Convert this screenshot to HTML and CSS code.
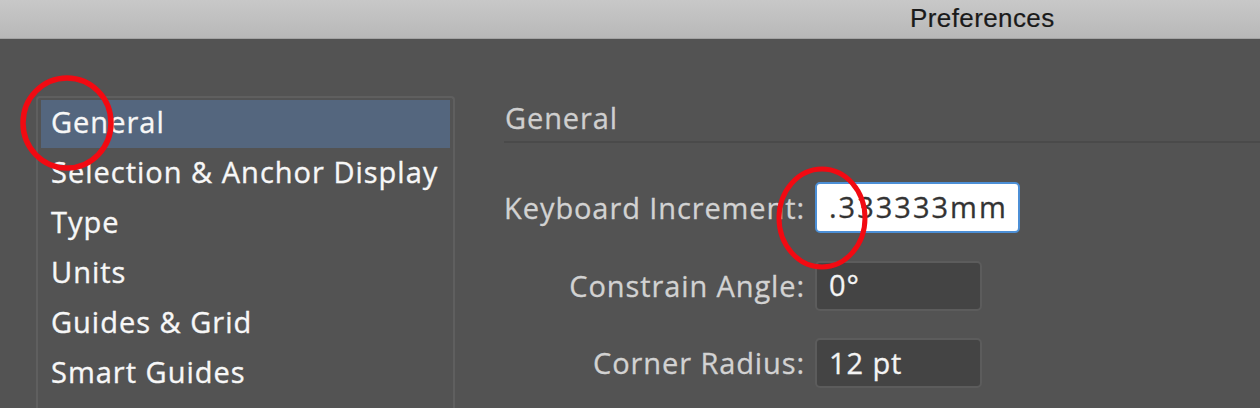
FILE: index.html
```html
<!DOCTYPE html>
<html>
<head>
<meta charset="utf-8">
<link rel="stylesheet" href="styles.css">
</head>
<body>
<div class="window">
  <header class="titlebar"><span class="title">Preferences</span></header>
  <main class="content">
    <nav class="sidebar">
      <div class="item selected">General</div>
      <div class="item">Selection &amp; Anchor Display</div>
      <div class="item">Type</div>
      <div class="item">Units</div>
      <div class="item">Guides &amp; Grid</div>
      <div class="item">Smart Guides</div>
    </nav>
    <section class="pane">
      <h2 class="pane-title">General</h2>
      <div class="form">
        <div class="row">
          <label class="label">Keyboard Increment:</label>
          <div class="field field-active">.333333mm</div>
        </div>
        <div class="row">
          <label class="label">Constrain Angle:</label>
          <div class="field">0°</div>
        </div>
        <div class="row">
          <label class="label">Corner Radius:</label>
          <div class="field">12 pt</div>
        </div>
      </div>
    </section>
  </main>
  <svg class="annotations" width="1260" height="408" viewBox="0 0 1260 408">
    <ellipse cx="67" cy="123" rx="44" ry="45" fill="none" stroke="#f20a12" stroke-width="5.5"/>
    <ellipse cx="822" cy="218" rx="43" ry="49" fill="none" stroke="#f20a12" stroke-width="5"/>
  </svg>
</div>
</body>
</html>
```

FILE: styles.css
```css
* { box-sizing: border-box; }
html, body {
  margin: 0;
  padding: 0;
  background: #535353;
}
.window {
  position: relative;
  width: 1260px;
  height: 408px;
  overflow: hidden;
  background: #535353;
  font-family: "Open Sans", "Noto Sans", sans-serif;
}
.titlebar {
  height: 39px;
  display: flex;
  align-items: center;
  padding-left: 910px;
  background: linear-gradient(#c8c8c8, #b8b8b8);
  border-bottom: 1px solid #a3a3a3;
}
.title {
  font-family: "Liberation Sans", Arial, sans-serif;
  font-size: 26px;
  letter-spacing: 0.4px;
  color: #1a1a1a;
  padding-bottom: 1px;
  -webkit-text-stroke: 0.2px #1a1a1a;
}
.content {
  display: flex;
  align-items: flex-start;
}
.sidebar {
  margin-left: 36px;
  margin-top: 57px;
  width: 419px;
  height: 340px;
  border: 2px solid #5f5f5f;
  border-bottom: none;
  border-radius: 4px 4px 0 0;
  padding: 2px 3px 0 3px;
  display: flex;
  flex-direction: column;
  gap: 2px;
}
.item {
  height: 48px;
  display: flex;
  align-items: center;
  padding-left: 10px;
  padding-bottom: 5px;
  font-size: 29px;
  color: #f7f7f7;
  letter-spacing: 1px;
  white-space: nowrap;
  -webkit-text-stroke: 0.35px #f7f7f7;
}
.item.selected {
  background: #54667e;
}
.pane {
  flex: 1;
  margin-left: 49px;
  margin-top: 57px;
}
.pane-title {
  margin: 0;
  height: 47px;
  display: flex;
  align-items: center;
  padding-left: 1px;
  padding-bottom: 2px;
  font-weight: normal;
  font-size: 29px;
  letter-spacing: 0.9px;
  color: #cfcfcf;
  border-bottom: 2px solid #4a4a4a;
  -webkit-text-stroke: 0.3px #cfcfcf;
}
.form {
  display: flex;
  flex-direction: column;
  gap: 27.5px;
  margin-top: 39px;
}
.row {
  display: flex;
  align-items: center;
  gap: 10px;
}
.label {
  width: 301px;
  text-align: right;
  font-size: 29px;
  letter-spacing: 0.9px;
  color: #d2d2d2;
  white-space: nowrap;
  padding-bottom: 1px;
  -webkit-text-stroke: 0.3px #d2d2d2;
}
.field {
  width: 167px;
  height: 50px;
  display: flex;
  align-items: center;
  padding-left: 12px;
  padding-bottom: 2px;
  background: #444444;
  border: 2px solid #5c5c5c;
  border-radius: 5px;
  font-size: 29px;
  letter-spacing: 0.9px;
  color: #f4f4f4;
  -webkit-text-stroke: 0.3px #f4f4f4;
}
.field-active {
  width: 205px;
  height: 51px;
  background: #ffffff;
  border-color: #4c8fd6;
  color: #333333;
  letter-spacing: 2px;
  -webkit-text-stroke: 0.3px #333333;
}
.annotations {
  position: absolute;
  left: 0;
  top: 0;
  pointer-events: none;
}
```
